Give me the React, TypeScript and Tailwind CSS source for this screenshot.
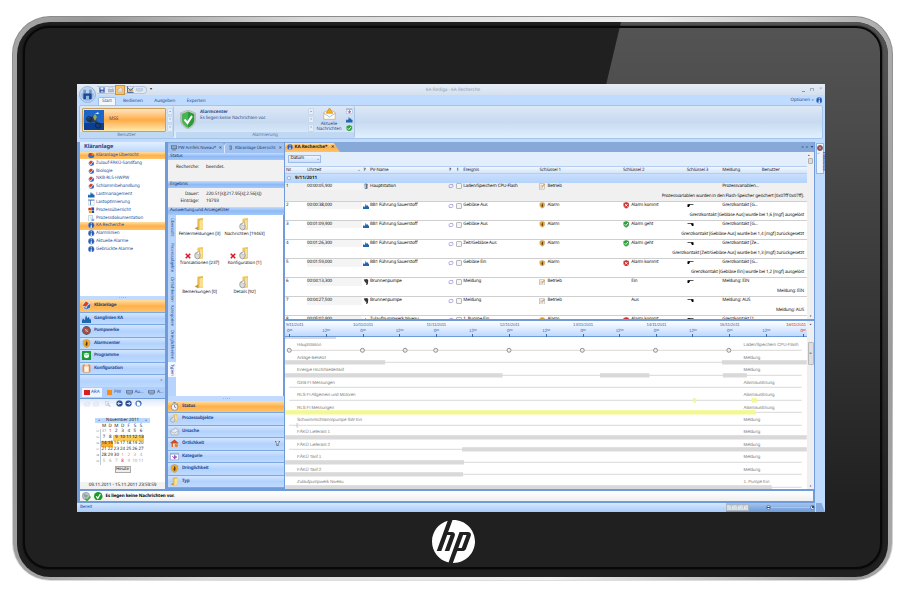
import React from "react";
import { SiHp } from "react-icons/si";

type Kind =
  | "pie" | "globe" | "bars" | "list" | "blocks" | "doc" | "info" | "gauge" | "shield" | "cube"
  | "clip" | "folder" | "folderdoc" | "clock" | "note" | "house" | "cat" | "edit" | "bad" | "good"
  | "station" | "pump" | "cycle" | "printer" | "disk" | "monitor" | "mail" | "magnifier" | "pen" | "back" | "fwd" | "sheet" | "guard" | "server";

const drawings: Record<Kind, React.ReactNode> = {
  pie: (<><ellipse cx="8" cy="9" rx="7.500" ry="6" fill="#2f72c9" /><path d="M8 9L1 5a7 5 0 0 1 8-2z" fill="#d8301e" /><path d="M9 3a7 5 0 0 1 6 5H9z" fill="#f08a24" /></>),
  globe: (<><circle cx="8" cy="8" r="7" fill="#d5e1f2" /><path d="M1 8L7 1l5 3-5 6z" fill="#df3a22" /><path d="M7 15l7-3 1-7-5 3z" fill="#2d68bd" /><path d="M2 10l5 2-1 3z" fill="#3a78c8" /></>),
  bars: (<path d="M0 16V11l2-3 3 3 2-9 3 6 2-3 2 5 2-1v7z" fill="#1f67ad" />),
  list: (<><rect x="1" y="1" width="14" height="14" fill="#fff" stroke="#9bb3d4" /><path d="M1 3h14M6 3v12" stroke="#3f72bd" strokeWidth="2" /></>),
  blocks: (<><rect x="1" y="2" width="6" height="6" fill="#d8301e" /><rect x="8" y="1" width="7" height="7" fill="#2d4fa8" /><rect x="2" y="9" width="6" height="6" fill="#e4a824" /><rect x="9" y="9" width="6" height="6" fill="#264a94" /></>),
  doc: (<><rect x="2" y="1" width="9" height="14" fill="#f7fbff" stroke="#7a9bc8" /><path d="M5 5h4M5 8h4" stroke="#9bb" /><path d="M9 9h6v6H8z" fill="#7db0e2" /></>),
  info: (<><circle cx="8" cy="8" r="7.300" fill="#2459b8" stroke="#8faede" /><path d="M8 3v3M8 7.500v6M6 13h4" stroke="#fff" strokeWidth="2.200" /></>),
  gauge: (<><circle cx="8" cy="8" r="6.800" fill="#b2453e" stroke="#555e66" strokeWidth="2" /><circle cx="8" cy="8" r="3.200" fill="#9b7b78" /><path d="M5 5l6 6" stroke="#ddd" /></>),
  shield: (<><path d="M8 .5l6 2.500v5c0 4-3 6-6 7.500C5 14 2 12 2 8V3z" fill="#f2a724" stroke="#a8a39a" /><path d="M8 3l2 4-1 6-3-3 1-3z" fill="#5a3a16" /></>),
  guard: (<><path d="M8 0l7.500 2.500v5.500c0 4-3.500 6.500-7.500 8C4 14.500.5 12 .5 8V2.500z" fill="#c9cfcb" stroke="#8f9a93" strokeWidth=".4" /><path d="M8 1.200l6.300 2.200v4.600c0 3.500-3 5.700-6.300 7z" fill="#2b9a3a" /><path d="M8 1.200L1.700 3.400V8c0 3.500 3 5.700 6.300 7z" fill="#46b552" /><path d="M4.500 8l3 3 4.500-6" stroke="#fff" strokeWidth="2" fill="none" /></>),
  cube: (<><rect width="16" height="16" rx="1" fill="#199b35" /><path d="M3 5l5-2 5 2-1 6-4 2-4-2z" fill="#f3fff4" /><path d="M4 6l4 1 4-1" stroke="#199b35" fill="none" /></>),
  clip: (<><rect x="1" y="1" width="14" height="14" rx="2" fill="#f08b3c" /><rect x="4" y="4" width="8" height="10" fill="#fff6e8" /><rect x="5" y="0" width="6" height="3" fill="#f6d9b8" /></>),
  folder: (<><path d="M5 1l8-1v14l-8 1z" fill="#e5b94f" /><path d="M8 3l5-1v11l-5 2z" fill="#f9e194" /><path d="M1 13l5-3v5z" fill="#c9983b" /></>),
  folderdoc: (<><path d="M5 1l8-1v14l-8 1z" fill="#efc75f" /><path d="M9 2l3 1v9l-3 2z" fill="#f9e29b" /><circle cx="5" cy="10.500" r="4" fill="#dcdcdc" stroke="#8f8f8f" /><path d="M3 8l5-3v5z" fill="#f4f4f4" stroke="#999" strokeWidth=".6" /></>),
  clock: (<><circle cx="8" cy="9" r="6" fill="#eef1f4" stroke="#8a8f95" strokeWidth="1.600" /><path d="M8 5v4l3 1M6 1h4M12 3l2 1" stroke="#6d6d6d" fill="none" strokeWidth="1.300" /></>),
  note: (<><path d="M1 7l9-5 5 3-1 9H2z" fill="#e6e9ed" stroke="#8e99a6" /><path d="M2 8l6 3 6-4" stroke="#8e99a6" fill="none" /></>),
  house: (<><path d="M0 7l8-6 7 6-2 1v6H3V8z" fill="#d24a20" /><path d="M5 8h7v6H5z" fill="#f7e4d8" /><path d="M9 8l5 3-3 4-3-3z" fill="#d7812c" /></>),
  cat: (<><rect x="1" y="2" width="14" height="12" fill="#fff" stroke="#789cc8" /><path d="M1 3.500h14" stroke="#7ba4dc" strokeWidth="2" /><path d="M4 7l4 5M8 6l4 3-4 3z" fill="#5eae48" stroke="#a33bb0" strokeWidth="1.500" /></>),
  edit: (<><rect x="1" y="2" width="12" height="13" fill="#f2f2f2" stroke="#8d8d8d" /><path d="M3 6h6M3 9h6M3 12h6" stroke="#aaa" /><path d="M6 10l7-9 2 2-7 8z" fill="#e49b35" /></>),
  bad: (<><path d="M8 0l7 3v5c0 4-3 6-7 8-4-2-7-4-7-8V3z" fill="#cf3030" stroke="#c2b3b3" /><path d="M5 5l6 6M11 5l-6 6" stroke="#fff" strokeWidth="2.200" /></>),
  good: (<><path d="M8 0l7 3v5c0 4-3 6-7 8-4-2-7-4-7-8V3z" fill="#2ca33a" stroke="#a9bcae" /><path d="M4 8l3 3 5-6" stroke="#fff" strokeWidth="2.200" fill="none" /></>),
  station: (<><path d="M4 2l6-1 2 2v12l-7 1z" fill="#5e7387" /><path d="M5 4l3-1v11H5z" fill="#a8c4da" /></>),
  pump: (<path d="M2 1l9-1 3 3-1 11-5 2 1-6-3-1-3-5z" fill="#363636" />),
  cycle: (<><path d="M2 9a6 5 0 0 1 10-4M14 7a6 5 0 0 1-10 4" stroke="#8c8edb" strokeWidth="1.800" fill="none" /><path d="M10 2l5 4h-5zM6 14L1 10h5z" fill="#8c8edb" /></>),
  server: (<><circle cx="7" cy="7" r="6.500" fill="#b9c2c6" stroke="#8a9499" /><path d="M3 3l8 3-3 4-5-2z" fill="#8fa39a" /><path d="M6 12l3 3 6-7" stroke="#43b03c" strokeWidth="3" fill="none" /></>),
  printer: (<><path d="M3 1h9v5H3z" fill="#fff" stroke="#8fa2bb" /><path d="M1 6h14v7H1z" fill="#b6c1cd" stroke="#7c8a9a" /></>),
  disk: (<><rect x="1" y="1" width="14" height="14" fill="#3158a8" /><rect x="4" y="1" width="8" height="6" fill="#eaf1fb" /><rect x="5" y="10" width="7" height="5" fill="#a6bbdf" /></>),
  monitor: (<><rect x="0" y="1" width="16" height="10" fill="#547099" /><rect x="2" y="3" width="12" height="6" fill="#8fa9c9" /><path d="M3 13h10" stroke="#7b8695" strokeWidth="3" /></>),
  mail: (<><path d="M1 6l7-4 7 4v9H1z" fill="#fff" stroke="#d2ab6c" /><path d="M1 7l7 5 7-5" stroke="#8fb0da" fill="none" /><path d="M8 0l4 7H4z" fill="#f9b815" stroke="#c87b1b" strokeWidth=".8" /></>),
  magnifier: (<><rect x="2" y="1" width="8" height="11" fill="#eef3f9" stroke="#a9bad1" /><circle cx="8" cy="8" r="3" fill="none" stroke="#98aec9" /><path d="M10 11l4 4" stroke="#7788a0" strokeWidth="2" /></>),
  pen: (<><path d="M1 1v14h14" stroke="#2d57a5" strokeWidth="2" fill="none" /><path d="M3 10l4-5 3 3 5-7-2 12H3z" fill="#e6a93d" /><path d="M2 4l6 6 6-6" stroke="#335fa8" fill="none" strokeWidth="2" /></>),
  back: (<><circle cx="8" cy="8" r="7" fill="#1c4287" stroke="#6f8fc4" /><path d="M12 8H5M8 4L4 8l4 4" stroke="#fff" strokeWidth="2" fill="none" /></>),
  fwd: (<><circle cx="8" cy="8" r="7" fill="#1c4287" stroke="#6f8fc4" /><path d="M4 8h7M8 4l4 4-4 4" stroke="#fff" strokeWidth="2" fill="none" /></>),
  sheet: (<><circle cx="8" cy="8" r="7" fill="#3b6cb5" /><path d="M4 4h5l3 4v5H4z" fill="#fff" /></>),
};

function Ic({ k, className = "size-[6.500px]" }: { k: Kind; className?: string }) {
  return <svg viewBox="0 0 16 16" preserveAspectRatio="none" className={`block shrink-0 ${className}`}>{drawings[k]}</svg>;
}

const nav: [Kind, string, boolean?][] = [
  ["pie", "Kläranlage Übersicht", true], ["globe", "Zulauf-FÄKÜ-Sandfang"], ["globe", "Biologie"], ["globe", "NKB-RLS-HWPW"],
  ["globe", "Schlammbehandlung"], ["bars", "Lastmanagement"], ["list", "Lastoptimierung"], ["blocks", "Prozessübersicht"],
  ["doc", "Prozessdokumentation"], ["info", "KA Recherche", true], ["info", "Alarmlinien"], ["info", "Aktuelle Alarme"], ["info", "Gebrückte Alarme"],
];
const modules: [Kind, string][] = [
  ["globe", "Kläranlage"], ["bars", "Ganglinien KA"], ["gauge", "Pumpwerke"], ["shield", "Alarmcenter"], ["cube", "Programme"], ["clip", "Konfiguration"],
];
const filters: [Kind, string][] = [
  ["clock", "Status"], ["folderdoc", "Prozessobjekte"], ["note", "Ursache"], ["house", "Örtlichkeit"], ["cat", "Kategorie"], ["shield", "Dringlichkeit"], ["folder", "Typ"],
];
const tiles: [Kind, string, boolean][] = [
  ["folder", "Fehlermeldungen [3]", false], ["folderdoc", "Nachrichten [19463]", false],
  ["folderdoc", "Transaktionen [237]", true], ["folderdoc", "Konfiguration [1]", true],
  ["folder", "Bemerkungen [0]", false], ["folderdoc", "Details [92]", false],
];
type Row = { n: number; t: string; pi: Kind; pv: string; ev: string; k1: string; k2: string; up: boolean | null; m: string; d: string };
const rows: Row[] = [
  { n: 1, t: "00:00:05,900", pi: "station", pv: "Hauptstation", ev: "Laden/Speichern CPU-Flash", k1: "Betrieb", k2: "", up: null, m: "Prozessvariablen...", d: "Prozessvariablen wurden in den Flash-Speicher gesichert [0x07ff 0x07ff]." },
  { n: 2, t: "00:00:38,000", pi: "bars", pv: "BB1 Führung Sauerstoff", ev: "Gebläse Aus", k1: "Alarm", k2: "Alarm kommt", up: true, m: "Grenzkontakt [G...", d: "Grenzkontakt [Gebläse Aus] wurde bei 1,6 [mgf] ausgelöst" },
  { n: 3, t: "00:01:09,900", pi: "bars", pv: "BB1 Führung Sauerstoff", ev: "Gebläse Aus", k1: "Alarm", k2: "Alarm geht", up: false, m: "Grenzkontakt [G...", d: "Grenzkontakt [Gebläse Aus] wurde bei 1,4 [mgf] zurückgesetzt" },
  { n: 4, t: "00:01:26,300", pi: "bars", pv: "BB1 Führung Sauerstoff", ev: "Zeit/Gebläse Aus", k1: "Alarm", k2: "Alarm geht", up: false, m: "Grenzkontakt [Ze...", d: "Grenzkontakt [Zeit/Gebläse Aus] wurde bei 1,3 [mgf] zurückgesetzt" },
  { n: 5, t: "00:01:59,000", pi: "bars", pv: "BB1 Führung Sauerstoff", ev: "Gebläse Ein", k1: "Alarm", k2: "Alarm kommt", up: true, m: "Grenzkontakt [G...", d: "Grenzkontakt [Gebläse Ein] wurde bei 1,2 [mgf] ausgelöst" },
  { n: 6, t: "00:04:13,300", pi: "pump", pv: "Brunnenpumpe", ev: "Meldung", k1: "Betrieb", k2: "Ein", up: true, m: "Meldung: EIN", d: "Meldung: EIN" },
  { n: 7, t: "00:04:27,500", pi: "pump", pv: "Brunnenpumpe", ev: "Meldung", k1: "Betrieb", k2: "Aus", up: false, m: "Meldung: AUS", d: "Meldung: AUS" },
  { n: 8, t: "00:05:02,900", pi: "bars", pv: "Zulaufpumpwerk Niveau", ev: "1. Pumpe Ein", k1: "Alarm", k2: "Alarm kommt", up: true, m: "Grenzkontakt [1...", d: "" },
];
type Lane = { l: string; r: string; bars?: [number, number][]; yellow?: boolean };
const lanes: Lane[] = [
  { l: "Hauptstation", r: "Laden/Speichern CPU-Flash" },
  { l: "Anlage Besetzt", r: "Meldung", bars: [[0, 100], [437, 522]] },
  { l: "Energie Hoch/Niedertarif", r: "Meldung", bars: [[0, 217.5], [315, 364.5], [438, 462]] },
  { l: "GEB FI Messungen", r: "Alarmauslösung" },
  { l: "RLS FI Allgemein und Motoren", r: "Alarmauslösung", yellow: true, bars: [[408, 411], [467, 472]] },
  { l: "RLS FI Messungen", r: "Alarmauslösung", yellow: true, bars: [[0, 471]] },
  { l: "Schwimmschlammpumpe SW Ein", r: "Meldung", bars: [[11, 13]] },
  { l: "FÄKÜ Lieferant 1", r: "Meldung", bars: [[0, 522]] },
  { l: "FÄKÜ Lieferant 2", r: "Meldung", bars: [[177, 522]] },
  { l: "FÄKÜ Tarif 1", r: "Meldung", bars: [[0, 179]] },
  { l: "FÄKÜ Tarif 2", r: "Meldung", bars: [[0, 178]] },
  { l: "Zulaufpumpwerk Niveau", r: "1. Pumpe Ein", bars: [[0, 487]] },
];
const dates = ["9/11/2011", "10/11/2011", "11/11/2011", "12/11/2011", "13/11/2011", "14/11/2011", "15/11/2011", "16/11/2011"];
const weeks = [
  [44, 31, 1, 2, 3, 4, 5, 6], [45, 7, 8, 9, 10, 11, 12, 13], [46, 14, 15, 16, 17, 18, 19, 20],
  [47, 21, 22, 23, 24, 25, 26, 27], [48, 28, 29, 30, 1, 2, 3, 4], [49, 5, 6, 7, 8, 9, 10, 11],
];

const ORANGE = "bg-linear-to-b from-[#ffdf9e] via-[#ffb04a] to-[#ffc36b]";
const BLUE = "bg-linear-to-b from-[#d3e5ff] via-[#b2d2fd] to-[#bedaff]";
const HEAD = "bg-linear-to-b from-[#c4ddff] via-[#8db9f5] to-[#a4c9fa]";

function Grip() {
  return (
    <div className="flex h-[4.500px] shrink-0 items-center justify-center gap-[1px] bg-[#c0dbff]">
      {[0, 1, 2, 3].map((i) => <i key={i} className="size-[1px] bg-[#9cb8df]" />)}
    </div>
  );
}

function Scroller() {
  return (
    <div className="flex w-[6px] flex-col gap-[0.500px]">
      {["▴", "▾", "▾"].map((c, i) => (
        <div key={i} className="flex flex-1 items-center justify-center rounded-[1px] border border-[#c6d8ee] bg-[#e4edf8] text-[3px] text-[#6f8bb5]">{c}</div>
      ))}
    </div>
  );
}

function Ribbon() {
  return (
    <div className="shrink-0">
      <div className="relative h-[10.500px] bg-linear-to-b from-[#e6edf6] to-[#d5e0ee]">
        <div className="flex h-full items-center pl-[20px] pr-[3px] pt-px">
          <div className="flex h-[8.500px] items-center gap-[2.500px] rounded-r-full border border-l-0 border-[#b7c6dc] bg-[#e0e9f5] pl-[2px] pr-[3px]">
            <Ic k="disk" className="size-[6px]" /><Ic k="printer" className="size-[6px]" />
            <span className="bg-[#ffc35e] p-px outline-[0.500px] outline-[#c79443]"><Ic k="note" className="size-[6px]" /></span>
            <Ic k="pen" className="size-[7px]" /><Ic k="monitor" className="h-[4px] w-[7px] opacity-30" />
          </div>
          <span className="ml-[3px] text-[4px]">▾</span>
          <span className="w-[602px] pt-[1px] text-center text-[4.700px] text-[#8f9fb6]">KA Rediga - KA Recherche</span>
          <span className="ml-auto flex items-center gap-[5px] text-[5px] text-[#8b97a8]"><i className="mt-[3px] h-px w-[3px] bg-[#8b97a8]" /><i className="h-[3px] w-[4px] border border-b-0 border-[#a3adbb]" /><i className="not-italic">×</i></span>
        </div>
        <svg viewBox="0 0 16 16" className="absolute left-[2px] top-[2px] z-10 size-[17px]">
          <circle cx="8" cy="8" r="7.500" fill="#c5daf2" stroke="#8ea8cd" strokeWidth=".8" />
          <circle cx="8" cy="8" r="6" fill="#8fb6e6" />
          <path d="M5.300 3.500v9M10.700 3.500v9M5.300 8h5.400" stroke="#1c468f" strokeWidth="2.400" />
          <path d="M2 7a6 5 0 0 1 12 0z" fill="#e8f3ff" opacity=".45" />
        </svg>
      </div>
      <div className="flex h-[10.500px] items-end bg-[#bfdbff] pl-[21px] pr-[3px] text-[4.600px] text-[#2c4f91]">
        <div className="flex h-[8.500px] w-[18px] items-center justify-center rounded-t-[2px] border border-b-0 border-[#9dbce6] bg-[#f3f8fe]">Start</div>
        <div className="flex h-[8.500px] items-center gap-[11.500px] pl-[7px] pt-px"><span>Bedienen</span><span>Ausgeben</span><span>Experten</span></div>
        <div className="ml-auto flex h-[9px] items-center gap-[2px]">Optionen <span className="text-[3px]">▾</span><Ic k="info" className="size-[6.500px]" /></div>
      </div>
      <div className="h-[37px] bg-[#bfdbff] px-[2px]">
        <div className="flex h-[34px] gap-[2px] rounded-[2px] border border-[#a6c3ea] bg-linear-to-b from-[#dce8f6] via-[#c8daf0] to-[#e0f0ff]">
          <div className="flex w-[94px] flex-col rounded-[2px] border-r border-[#adc6e6]">
            <div className="flex h-[25.500px] gap-px pl-[2px] pt-[1.500px]">
              <div className="flex w-[84px] items-center rounded-[1px] border border-[#cda05a] bg-linear-to-b from-[#ffe4bd] via-[#ffab42] to-[#ffe9ae] pl-px">
                <svg viewBox="0 0 20 20" className="size-[20px]">
                  <rect width="20" height="20" fill="#1d66c8" /><rect y="13" width="20" height="7" fill="#0b3f94" />
                  <path d="M3 9l6-3 4 1-1 3 3 4-1 2-4-4-4 1z" fill="#2b3a4c" />
                  <circle cx="5" cy="9" r="2.300" fill="none" stroke="#182334" strokeWidth="1" /><circle cx="14" cy="15.500" r="2.600" fill="none" stroke="#182334" strokeWidth="1" />
                  <path d="M9 7l2-3 2 3-2 4z" fill="#9aa85a" /><path d="M11 4l3-2 1 2z" fill="#e8e8d2" />
                </svg>
                <span className="ml-[5px] text-[4.800px] text-[#564a4a]">MSS</span>
              </div>
              <Scroller />
            </div>
            <div className="mt-auto h-[6.500px] bg-[#c1d8f2] pt-[1px] text-center text-[4.500px] leading-[5.500px] text-[#5679b0]">Benutzer</div>
          </div>
          <div className="flex w-[179px] flex-col rounded-[2px] border-r border-[#adc6e6]">
            <div className="flex h-[25.500px] pt-[1.500px]">
              <Ic k="guard" className="ml-[4px] mt-[2px] h-[19px] w-[16px]" />
              <div className="ml-[4px] mt-[1.500px] w-[108px] text-[4.600px] leading-[6px] text-[#2c4f91]"><b className="block">Alarmcenter</b>Es liegen keine Nachrichten vor.</div>
              <Scroller />
              <div className="ml-[2px] flex w-[26px] flex-col items-center text-center text-[4.500px] leading-[5px] text-[#2c4f91]"><Ic k="mail" className="mb-[2.500px] h-[12px] w-[13px] shrink-0" />Aktuelle<br />Nachrichten</div>
              <div className="ml-[4px] flex flex-col gap-[2px]"><Ic k="cat" /><Ic k="bars" /><Ic k="good" /></div>
            </div>
            <div className="mt-auto h-[6.500px] bg-[#c1d8f2] pt-[1px] text-center text-[4.500px] leading-[5.500px] text-[#5679b0]">Alarmierung</div>
          </div>
        </div>
      </div>
    </div>
  );
}

function dayTone(w: number, d: number) {
  if ((w === 1 && d >= 3) || (w === 2 && d <= 2)) return w === 2 ? "bg-[#f5ae32] text-black" : "bg-[#fbcb5b] text-black";
  if ((w === 0 && d === 2) || (w === 5 && d === 4)) return "text-[#e02020]";
  if ((w === 0 && d === 1) || (w === 4 && d > 3) || w === 5) return "text-[#a5a5a5]";
  return "text-[#222]";
}

function Sidebar() {
  return (
    <div className="flex w-[85px] flex-col">
      <div className="h-[9.500px] bg-linear-to-b from-[#e3efff] to-[#bcd8fd] pl-[4px] text-[5.600px] font-bold leading-[9px] text-[#1c458d]">Kläranlage</div>
      <div className="flex h-[144px] flex-col bg-white">
        {nav.map(([k, t, hot]) => (
          <div key={t} className={`flex h-[7.820px] shrink-0 items-center gap-[1.500px] pl-[8px] text-[4.500px] text-[#27509a] ${hot ? ORANGE : ""}`}><Ic k={k} />{t}</div>
        ))}
      </div>
      <Grip />
      {modules.map(([k, t], i) => (
        <div key={t} className={`flex h-[12.500px] shrink-0 items-center gap-[3px] border-b border-[#7ba7e2] pl-[2px] text-[4.500px] font-bold tracking-[-0.200px] ${i ? BLUE + " text-[#27509a]" : ORANGE + " text-[#27406e]"}`}><Ic k={k} className="size-[9px]" />{t}</div>
      ))}
      <div className={`h-[12px] shrink-0 ${BLUE} pr-[3px] text-right text-[3px] leading-[11px] text-[#456]`}>▾</div>
      <div className="flex h-[11px] shrink-0 items-center gap-[3px] bg-[#aecdf8] px-[2px] text-[4.600px] text-[#27509a]">
        <span className="flex h-[9px] items-center gap-[1.500px] bg-[#eef5ff] px-[2px]"><i className="size-[5.500px] bg-[#d81e1e]" />ARA</span>
        <span className="flex items-center gap-[2px] pl-[2px]"><i className="size-[5.500px] bg-[#f58a18]" />PW</span>
        <span className="flex items-center gap-[1.500px] pl-[2px]"><Ic k="monitor" className="h-[5px] w-[7px]" />Au...</span>
        <span className="flex items-center gap-[1.500px] pl-[2px]"><Ic k="monitor" className="h-[5px] w-[7px]" />A...</span>
      </div>
      <div className="h-[1px] shrink-0 bg-[#6f9bd9]" />
      <div className="flex h-[90px] shrink-0 flex-col bg-white text-[4.600px]">
        <div className="flex h-[9px] items-center gap-[2.500px] bg-linear-to-b from-[#dce9fb] to-white pl-[4px]">
          <Ic k="note" className="size-[6px] opacity-30" /><Ic k="note" className="size-[6px] opacity-30" /><Ic k="magnifier" className="ml-[4px] size-[6px]" />
          <Ic k="back" className="ml-[2px] size-[7px]" /><Ic k="fwd" className="size-[7px]" /><Ic k="sheet" className="size-[7px]" />
        </div>
        <div className="ml-[15px] mt-[9.500px] w-[55px] tracking-normal">
          <div className="flex h-[5px] items-center justify-between bg-[#bcd8fd] px-[3px] text-[4.400px] text-[#222]"><span className="text-[3px] text-[#27509a]">◂</span>November 2011<span className="text-[3px] text-[#27509a]">▸</span></div>
          <div className="ml-[6px] grid h-[6.500px] w-[43.200px] grid-cols-7 items-center text-center">{"MDMDFSS".split("").map((d, i) => <span key={i}>{d}</span>)}</div>
          {weeks.map((w, wi) => (
            <div key={wi} className="flex h-[5.930px] items-center leading-[5.900px]">
              {w.map((d, di) => di === 0
                ? <span key={di} className="w-[6px] border-r border-[#bcd] pr-[1px] text-right text-[2.600px] text-[#557]">{d}</span>
                : <span key={di} className={`h-[5.930px] w-[6.170px] text-center text-[4.500px] ${dayTone(wi, di)}`}>{d}</span>)}
            </div>
          ))}
          <div className="mx-auto mt-[1px] h-[7px] w-[16px] border border-[#aaa] bg-[#eee] text-center leading-[5px]">Heute</div>
        </div>
        <div className="mt-auto h-[7px] bg-[#f1f1f1] text-center leading-[7px] text-[#222]">09.11.2011 - 15.11.2011 23:59:59</div>
      </div>
    </div>
  );
}

function FilterPanel() {
  return (
    <div className="ml-[3px] flex w-[116px] flex-col">
      <div className="flex h-[10.500px] items-end bg-[#86a9da] text-[4.300px] text-[#223c6e]">
        <div className="flex h-[9.500px] w-[56px] items-center gap-[1px] whitespace-nowrap rounded-t-[2px] bg-[#9fc2f2] pl-[3px]"><Ic k="monitor" className="size-[6px]" />PW Arnfels Niveau* <b className="ml-auto pr-[2px]">✕</b></div>
        <div className="flex h-[9.500px] flex-1 items-center gap-[2px] whitespace-nowrap rounded-tl-[4px] border-l border-[#dceaff] bg-[#9fc2f2] pl-[3px]"><Ic k="station" className="size-[5px]" />Kläranlage Übersicht <b className="ml-auto pr-[2px]">✕</b></div>
      </div>
      <div className={`h-[7.500px] pl-[2px] text-[4.500px] leading-[7.500px] text-[#1d3765] ${HEAD}`}>Status</div>
      <div className="h-[20.500px] bg-[#f1f1f1] pt-[3.500px] text-[4.600px] leading-[6px]"><span className="inline-block w-[31px] text-right">Recherche:</span><span className="ml-[7px]">beendet.</span></div>
      <div className={`h-[7.500px] pl-[2px] text-[4.500px] leading-[7.500px] text-[#1d3765] ${HEAD}`}>Ergebnis</div>
      <div className="h-[19px] bg-[#f1f1f1] pt-[3px] text-[4.600px] leading-[7.200px]">
        <div><span className="inline-block w-[31px] text-right">Dauer:</span><span className="ml-[7px]">220.51[s](217.95[s];2.56[s])</span></div>
        <div><span className="inline-block w-[31px] text-right">Einträge:</span><span className="ml-[7px]">19793</span></div>
      </div>
      <div className={`h-[8px] pl-[2px] text-[4.400px] leading-[7.500px] text-[#1d3765] ${HEAD}`}>Auswertung und Anzeigefilter</div>
      <div className="flex h-[181px]">
        <div className="flex w-[8px] flex-col items-center bg-[#b7d4fc] pt-[3px] text-[4.300px] leading-[8px] tracking-[-0.100px] text-[#27509a] [&>span]:shrink-0 [&>span]:[writing-mode:vertical-rl]">
          <span className="h-[25px]">Übersicht</span><span className="h-[34px]">Prozessobjekte</span><span className="h-[28px]">Örtlichkeiten</span><span className="h-[25px]">Kategorien</span><span className="h-[32px]">Dringlichkeiten</span>
          <span className="h-[15px] bg-[#f2f7ff] text-center">Typen</span>
        </div>
        <div className="grid w-[107px] auto-rows-[29px] grid-cols-[45px_45px] content-start bg-white pl-[1px] pt-[3px] text-center text-[4.400px] leading-[7px]">
          {tiles.map(([k, t, x]) => (
            <div key={t} className="flex flex-col items-center whitespace-nowrap">
              <div className="flex h-[13px] items-center">{x && <svg viewBox="0 0 8 8" className="-ml-[9px] mr-[3px] mt-[4px] size-[6px]"><path d="M1 1l6 6M7 1L1 7" stroke="#d71920" strokeWidth="2" /></svg>}<Ic k={k} className="h-[13px] w-[11px]" /></div>{t}
            </div>
          ))}
        </div>
      </div>
      <Grip />
      {filters.map(([k, t], i) => (
        <div key={t} className={`flex h-[12.500px] shrink-0 items-center gap-[3px] border-b border-[#7ba7e2] pl-[2px] text-[4.500px] font-bold tracking-[-0.200px] ${i ? BLUE + " text-[#27509a]" : ORANGE + " text-[#27406e]"}`}>
          <Ic k={k} className="size-[9px]" />{t}
          {i === 3 && <svg viewBox="0 0 8 8" className="ml-auto mr-[4px] size-[5px]"><path d="M0 0h8L5 4v4H3V4z" fill="#fff" stroke="#333" /></svg>}
        </div>
      ))}
    </div>
  );
}

const GRID = "grid grid-cols-[21px_54.500px_8.500px_77px_9px_7.300px_76.200px_8px_75.500px_8.300px_55.400px_35.600px_39.400px_44px]";

function Table() {
  return (
    <div className="flex h-[167px]">
      <div className="flex w-[522px] flex-col overflow-hidden bg-white text-[4.500px] tracking-[-0.150px] text-[#111]">
        <div className="flex h-[13.500px] shrink-0 items-center bg-[#e3eefd] pl-[3px]"><div className="flex h-[7.500px] w-[33px] items-center justify-between border border-[#9fbce6] bg-linear-to-b from-[#eef5ff] to-[#c9defa] px-[1.500px]">Datum<span className="text-[3px] text-[#6d94cc]">▴</span></div></div>
        <div className={`${GRID} h-[8px] shrink-0 items-center border-y border-[#b5cdf0] bg-linear-to-b from-[#f3f8ff] to-[#d3e4fa] pl-[1px] leading-[7px] text-[#223]`}>
          <span>Nr.</span><span className="flex justify-between pr-[2px]">Uhrzeit<i className="text-[3px] not-italic text-[#6d94cc]">▴</i></span><b className="pl-[2px]">?</b><span>PV-Name</span><b className="pl-[2px]">?</b><b className="pl-[1px]">!</b><span>Ereignis</span><span className="col-span-2">Schlüssel 1</span><span className="col-span-2">Schlüssel 2</span><span>Schlüssel 3</span><span>Meldung</span><span>Benutzer</span>
        </div>
        <div className="flex h-[9.200px] shrink-0 items-center gap-[4px] bg-linear-to-b from-[#c9dffd] to-[#b4d3fb] pl-[2px] text-[4.600px] font-bold tracking-normal"><i className="size-[4px] rounded-[1px] border border-[#a5b8d4] bg-[#e8f1ff]" />9/11/2011</div>
        {rows.map((r) => (
          <div key={r.n} className={`h-[19.080px] shrink-0 border-b border-[#cfcfcf] pl-[1px] ${r.n === 1 ? "bg-[#f0f0f0]" : ""}`}>
            <div className={`${GRID} h-[7.500px] items-center whitespace-nowrap leading-[7.500px]`}>
              <span>{r.n}</span><span className="bg-[#f4f4f4]">{r.t}</span><Ic k={r.pi} className="ml-[1px] size-[6px]" /><span>{r.pv}</span>
              <Ic k="cycle" className="ml-[1px] size-[6px]" /><i className="size-[6px] rounded-[1px] border border-[#b9b9b9] bg-[#f5f5f5]" /><span>{r.ev}</span>
              <Ic k={r.k1 === "Alarm" ? "shield" : "edit"} /><span>{r.k1}</span>
              {r.k2.startsWith("Alarm") ? <Ic k={r.up ? "bad" : "good"} /> : <i />}<span>{r.k2}</span>
              {r.up === null ? <i /> : <svg viewBox="0 0 12 6" className="h-[3px] w-[7px]">{r.up ? <path d="M2 1h10" stroke="#111" strokeWidth="1.400" /> : <path d="M0 1h10" stroke="#111" strokeWidth="1.400" />}{r.up ? <path d="M0 .4h4.500v2L3 6H0z" /> : <path d="M12 6V.4H7.500v2L9 6z" />}</svg>}
              <span>{r.m}</span><span />
            </div>
            <div className="pr-[3px] pt-[2.500px] text-right leading-[7px]">{r.d}</div>
          </div>
        ))}
      </div>
      <div className="flex w-[7px] flex-col items-center justify-between bg-[#efefef] text-[3px] leading-[6px] text-[#333]"><span>▴<i className="block h-[6px] w-[5px] rounded-[1px] border border-[#b0b0b0] bg-[#dedede]" /></span><span>▾</span></div>
    </div>
  );
}

function Timeline() {
  return (
    <div className="flex h-[168px]">
      <div className="w-[522px] overflow-hidden bg-white font-['Liberation_Sans',sans-serif] text-[4.500px] tracking-[-0.100px] text-[#808080]">
        <div className="h-[16px] border-b border-[#6d9ad8] bg-linear-to-b from-white to-[#bfd9ff] text-[#3f66a8]">
          <div className="-ml-[32px] flex w-[600px]">
            {dates.map((d, i) => (
              <div key={d} className={`w-[73.350px] shrink-0 ${i === 7 ? "text-[#e22]" : ""}`}>
                <div className={`text-[4.300px] leading-[7px] ${i === 0 ? "pl-[10px]" : i === 7 ? "pr-[14px]" : ""} text-center`}>{d}</div>
                <div className="flex h-[6px] justify-center"><span className="w-[36.700px] text-center leading-[6px]">0<sup className="text-[2.800px]">00</sup></span></div>
                <i className="mx-auto block h-[2.500px] w-px bg-current" />
              </div>
            ))}
          </div>
          <div className="-mt-[8.500px] ml-[4.500px] flex">
            {dates.slice(1).map((d) => (
              <div key={d} className="w-[73.350px] shrink-0 text-center"><div className="h-[6px] leading-[6px]">12<sup className="text-[2.800px]">00</sup></div><i className="mx-auto block h-[2.500px] w-px bg-current" /></div>
            ))}
          </div>
        </div>
        <div className="h-[3px]"><div className="h-[2px] w-[51px] bg-[#d9d9d9]" /></div>
        {lanes.map((l, i) => (
          <div key={l.l} className="h-[12.460px]">
            <div className="flex h-[7.800px] items-end pl-[12px] leading-[5.500px]"><span className="w-[446.500px]">{l.l}</span><span>{l.r}</span></div>
            <svg viewBox="0 0 522 4.660" className="block h-[4.660px] w-[522px] overflow-visible">
              <path d="M4 2.300H517" stroke="#d9d9d9" />
              {(l.bars ?? []).map(([a, b], j) => <rect key={j} x={a} y="0.200" width={b - a} height="4.300" fill={l.yellow ? "#f3f88f" : "#d9d9d9"} />)}
              {i === 0 && [4, 77.3, 120, 150.6, 224, 297.3, 370.6, 444].map((x) => <circle key={x} cx={x} cy="2.300" r="2" fill="#eee" stroke="#888" strokeWidth=".9" />)}
            </svg>
          </div>
        ))}
      </div>
      <div className="flex w-[7px] flex-col items-center justify-between bg-[#efefef] text-[3px] leading-[6px] text-[#333]"><span>▴</span><i className="-mt-[104px] h-[23px] w-[6px] rounded-[1px] border border-[#b9b9b9] bg-[#dedede] text-center not-italic leading-[20px]">≡</i><span>▾</span></div>
    </div>
  );
}

function Screen() {
  return (
    <div className="flex h-[428px] w-[748px] flex-col overflow-hidden bg-[#bfdbff] font-['Noto_Sans','DejaVu_Sans',sans-serif] font-normal tracking-[-0.080px] text-[#222]">
      <Ribbon />
      <div className="flex h-[370px]">
        <div className="flex w-[738px] flex-col bg-[#6f9bdb]">
          <div className="flex h-[347px] overflow-hidden pl-[3px]">
            <Sidebar />
            <FilterPanel />
            <div className="ml-[1px] flex w-[529px] flex-col">
              <div className="flex h-[10px] items-end bg-[#86a9da] text-[4.600px]">
                <div className={`flex h-[9.500px] w-[55px] items-center gap-[1.500px] whitespace-nowrap pl-[2px] font-bold text-[#222] [clip-path:polygon(0_0,88%_0,100%_100%,0_100%)] ${ORANGE}`}><Ic k="info" className="size-[6px]" />KA Recherche* <b className="ml-[2px]">✕</b></div>
                <span className="ml-auto flex gap-[3px] pr-[1px] text-[4px] leading-[9px] text-[#3c62a3]"><span>◂</span><span>▸</span><span className="text-[#1b2f55]">▾</span></span>
              </div>
              <Table />
              <div className="h-[2px]" />
              <Timeline />
            </div>
          </div>
          <div className="ml-[3px] mt-[2px] flex h-[10px] w-[733px] shrink-0 items-center gap-[3px] bg-linear-to-b from-white to-[#efefef] pl-[2px] text-[4.500px] font-bold text-black"><Ic k="server" className="size-[9px]" />
            <svg viewBox="0 0 16 16" className="size-[8.500px]"><circle cx="8" cy="8" r="8" fill="#1a9b26" /><path d="M4 8l3 4 5-8" stroke="#fff" strokeWidth="2.200" fill="none" /></svg>Es liegen keine Nachrichten vor.</div>
          <div className="mt-[1.500px] flex h-[9.500px] items-center bg-linear-to-b from-[#d6e7ff] to-[#a9cbf8] pl-[3px] text-[4.500px] text-[#27509a]">Bereit
            <div className="ml-auto flex h-full w-[89px] items-center bg-linear-to-b from-[#a5c4ee] to-[#6f9bd8]">
              <span className="flex h-[7px] w-[23px] items-center justify-center gap-[2px] border border-[#a9b8c8] bg-[#d8dde2]"><Ic k="list" className="size-[4px] opacity-50" /><Ic k="list" className="size-[4px] opacity-50" /><Ic k="list" className="size-[4px] opacity-50" /></span>
              <span className="ml-[17px] flex size-[5px] items-center justify-center rounded-full border border-[#557bb0] bg-[#e9f1fc]"><i className="h-px w-[3px] bg-[#446]" /></span>
              <i className="h-px flex-1 bg-[#a9c6ee]" />
              <span className="flex size-[5px] items-center justify-center rounded-full border border-[#557bb0] bg-[#e9f1fc]"><i className="size-[2px] bg-[#446]" /></span>
            </div>
          </div>
        </div>
        <div className="flex w-[10px] flex-col bg-[#bfdbff] pl-[1px] pt-[1px]">
          <div className="flex h-[31px] w-[8px] flex-col items-center gap-[1px] border border-[#95b6e5] bg-[#eaf3ff] pt-[1px] text-[3.500px] leading-[6px] tracking-[-0.200px] text-[#27509a]"><Ic k="gauge" className="size-[6px]" /><span className="[writing-mode:vertical-rl]">Entstehende 1</span></div>
          <div className="mt-auto h-[9.500px] bg-[#86abe0] [clip-path:polygon(0_0,60%_0,100%_100%,0_100%)]" />
        </div>
      </div>
    </div>
  );
}

export default function App() {
  return (
    <div className="h-[596px] w-[900px] overflow-hidden bg-white pl-[12px] pt-[16px] [text-rendering:geometricPrecision]">
      <div className="h-[564.500px] w-[881px] rounded-[38px] bg-linear-to-b from-[#8b8b8b] via-[#a9a9a9] to-[#dddddd] p-px">
        <div className="h-full rounded-[37px] bg-[linear-gradient(100deg,#a5a5a5_0%,#999_8%,#d8d8d8_30%,#efefef_65%,#9a9a9a_96%,#aaa_100%)] px-[4px] pb-[3px] pt-[5px]">
          <div className="relative h-full overflow-hidden rounded-[33px] bg-[#202020] px-[6px] pb-[8px] pt-[4px]">
            <svg viewBox="0 0 871 556" className="absolute left-0 top-0 h-[556px] w-[871px]">
              <defs><linearGradient id="sheen" x1="0" y1="0" x2="0" y2="1"><stop offset="0" stopColor="#545454" /><stop offset=".2" stopColor="#4c4c4c" /><stop offset="1" stopColor="#202020" /></linearGradient></defs>
              <path d="M604 0L589 63L490 482H871V0z" fill="url(#sheen)" />
            </svg>
            <div className="relative h-full rounded-[26px] border-2 border-[#080808] shadow-[0_0_2px_#000]">
              <div className="pl-[52px] pt-[56px]"><Screen /></div>
              <div className="pl-[407px] pt-[8px]"><SiHp className="size-[43px] text-white" /></div>
            </div>
          </div>
        </div>
      </div>
    </div>
  );
}
